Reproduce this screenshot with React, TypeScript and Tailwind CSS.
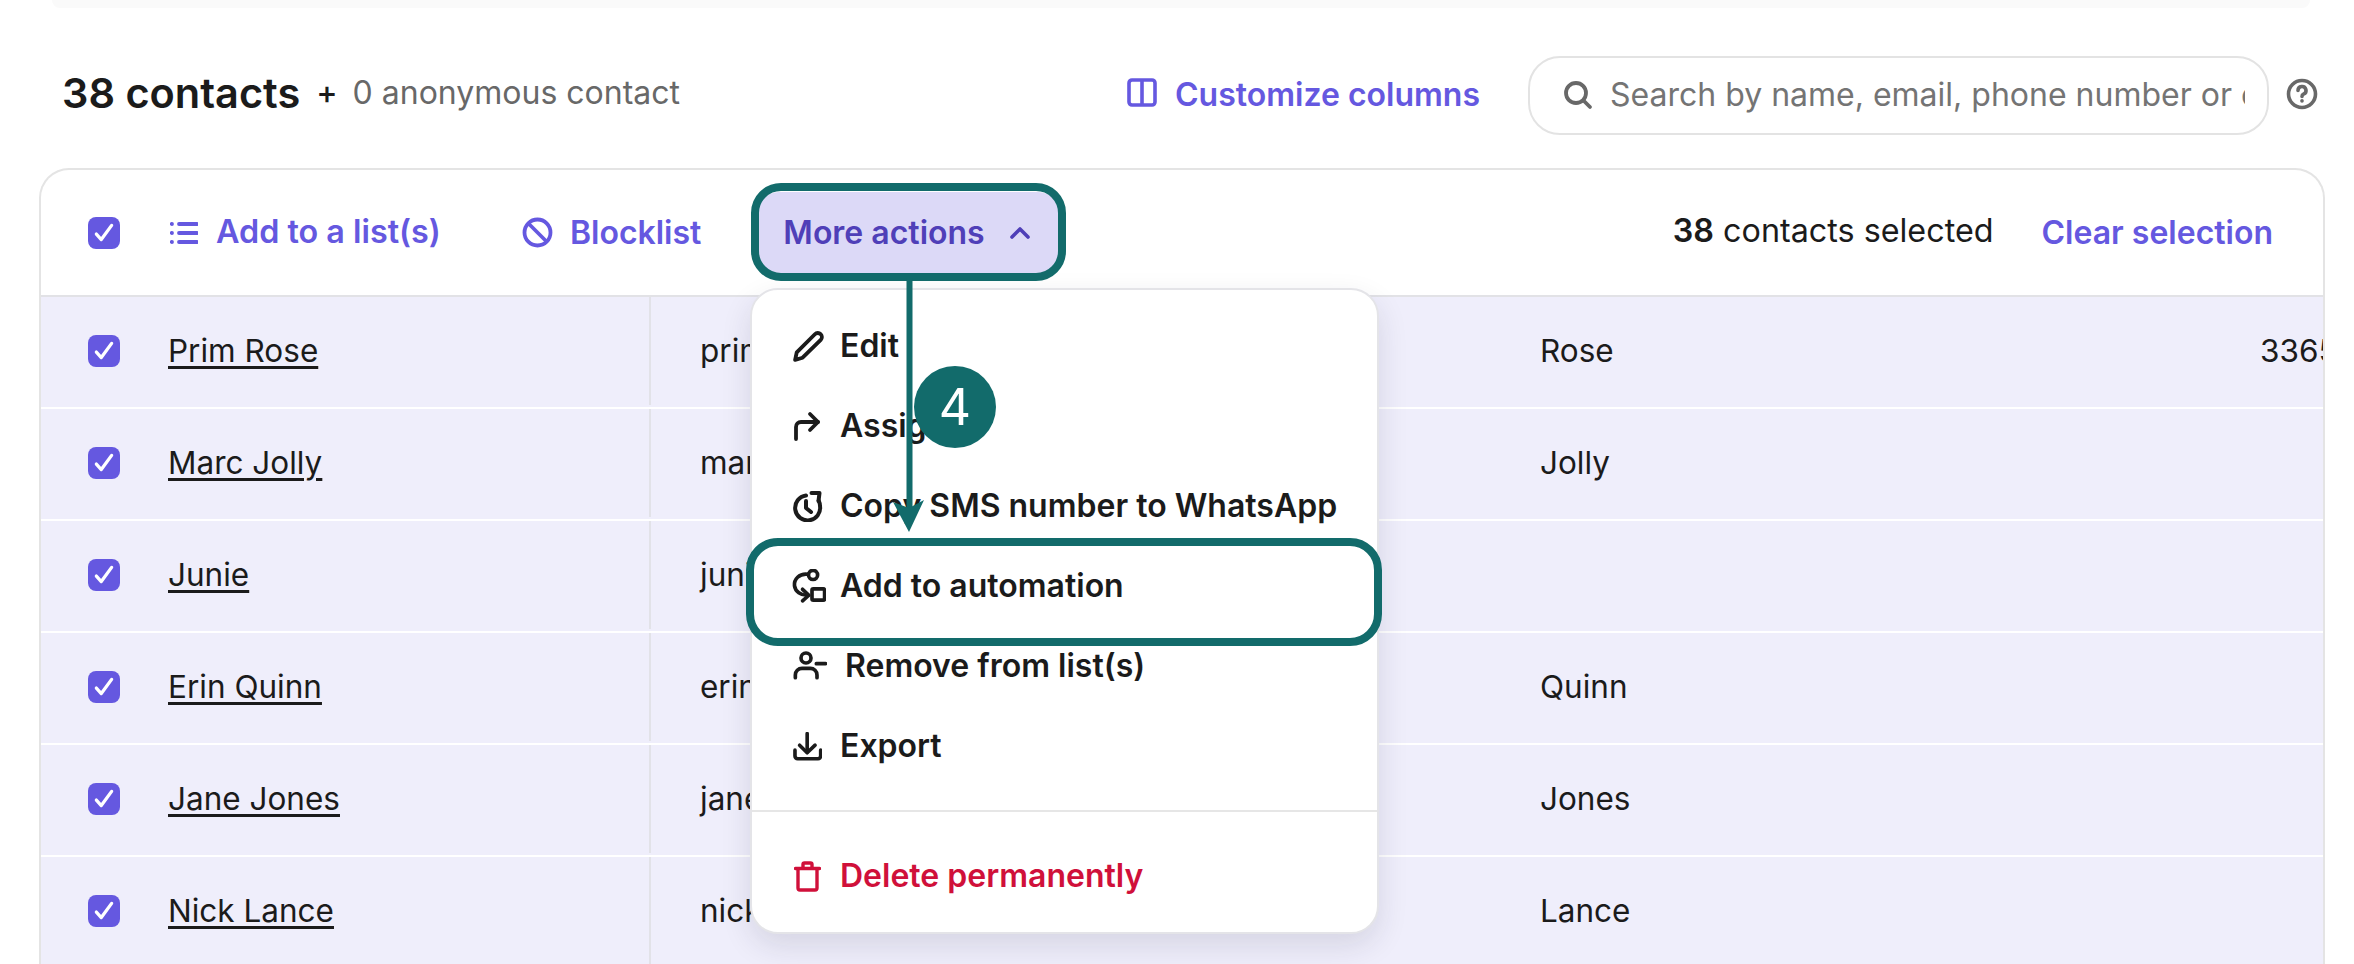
import React from "react";

const rows = [
  ["Prim Rose", "prim.rose@example.com", "Rose", "33655512345"],
  ["Marc Jolly", "marc.jolly@example.com", "Jolly", ""],
  ["Junie", "junie@example.com", "", ""],
  ["Erin Quinn", "erin.quinn@example.com", "Quinn", ""],
  ["Jane Jones", "jane.jones@example.com", "Jones", ""],
  ["Nick Lance", "nick.lance@example.com", "Lance", ""],
];

function Check() {
  return (
    <span className="flex h-8 w-8 shrink-0 items-center justify-center rounded-lg bg-[#6558e0]">
      <svg width="24" height="24" viewBox="0 0 22 22" fill="none" stroke="#fff" strokeWidth="3" strokeLinecap="round" strokeLinejoin="round">
        <path d="M4 12l4.500 5L18 4" />
      </svg>
    </span>
  );
}

function Item({ icon, label, red, extra }: { icon: React.ReactNode; label: string; red?: boolean; extra?: boolean }) {
  return (
    <div className={`flex h-20 items-center pl-[41px] text-[32px] font-semibold ${red ? "text-[#d0103a]" : "text-[#1b1b1b]"}`}>
      <span className={`flex h-8 items-center justify-start ${extra ? "w-[52px]" : "w-[47px]"}`}>{icon}</span>
      <span>{label}</span>
    </div>
  );
}

const s = { fill: "none", stroke: "#1b1b1b", strokeLinecap: "round" as const, strokeLinejoin: "round" as const };

export default function App() {
  return (
    <div className="relative flex h-[964px] w-[2354px] flex-col overflow-hidden bg-white font-['Inter',sans-serif] text-[#1b1b1b]">
      <div className="ml-[52px] h-2 w-[2258px] shrink-0 rounded-b-2xl bg-[#fafafa]" />
      <div className="flex h-[160px] shrink-0 items-center pl-[62px] pr-[36px] pt-[10px]">
        <span className="text-[41.500px] font-semibold">38 contacts</span>
        <span className="ml-4 text-[32px] font-medium">+</span>
        <span className="ml-[15px] text-[32px] text-[#686868]">0 anonymous contact</span>
        <div className="ml-auto flex items-center pt-[3px]">
          <svg width="30" height="30" viewBox="0 0 30 30" fill="none" stroke="#6558e0" strokeWidth="3.600" className="mb-[3px]">
            <rect x="2" y="2" width="26" height="25" rx="3" />
            <path d="M15 2v25" />
          </svg>
          <span className="ml-[18px] text-[32px] font-semibold text-[#6558e0]">Customize columns</span>
        </div>
        <div className="ml-[48px] mt-[4px] flex h-[79px] w-[741px] items-center overflow-hidden rounded-[32px] border-2 border-[#e3e3e3] pl-[33px] pr-[22px] text-[32px] text-[#747474]">
          <svg width="30" height="30" viewBox="0 0 30 30" fill="none" stroke="#686868" strokeWidth="3.800" strokeLinecap="round" className="shrink-0">
            <circle cx="13" cy="13" r="10" />
            <path d="M20.500 20.500L27 27" />
          </svg>
          <span className="ml-[17px] overflow-hidden whitespace-nowrap">Search by name, email, phone number or email</span>
        </div>
        <svg width="32" height="32" viewBox="0 0 32 32" fill="none" stroke="#686868" strokeWidth="3.600" strokeLinecap="round" className="ml-[17px] mt-[2px]">
          <circle cx="16" cy="16" r="13.500" />
          <path d="M12 12.500a4 4 0 1 1 5.500 3.700c-1 .5-1.500 1-1.500 2.300" />
          <path d="M16 22.800v.2" />
        </svg>
      </div>

      <div className="ml-[39px] flex w-[2286px] flex-1 flex-col overflow-hidden rounded-t-[30px] border-2 border-b-0 border-[#e4e4e4]">
        <div className="flex h-[127px] shrink-0 items-center border-b-2 border-[#e2e2e6] pl-[47px] pr-[50px]">
          <Check />
          <svg width="28" height="24" viewBox="0 0 28 24" fill="none" stroke="#6558e0" strokeWidth="3.800" strokeLinecap="round" className="ml-[50px]">
            <path d="M1.800 3h.2M1.800 12h.2M1.800 21h.2M9 3h18M9 12h18M9 21h18" />
          </svg>
          <span className="ml-[18px] text-[32.300px] font-semibold text-[#6558e0]">Add to a list(s)</span>
          <svg width="31" height="31" viewBox="0 0 31 31" fill="none" stroke="#6558e0" strokeWidth="3.800" className="ml-[81px]">
            <circle cx="15.500" cy="15.500" r="13" />
            <path d="M6.500 6.500l18 18" />
          </svg>
          <span className="ml-[17px] text-[32px] font-semibold text-[#6558e0]">Blocklist</span>
          <div className="ml-[56px] flex h-[82px] w-[303px] shrink-0 items-center rounded-[22px] bg-[#dcd9f7] pl-[26px] text-[32px] font-semibold text-[#4f3fb8]">
            <span>More actions</span>
            <svg width="22" height="14" viewBox="0 0 22 14" fill="none" stroke="#4f3fb8" strokeWidth="3.600" strokeLinecap="round" strokeLinejoin="round" className="ml-6">
              <path d="M3 11l8-8 8 8" />
            </svg>
          </div>
          <span className="mb-[3px] ml-auto text-[32.300px]">
            <span className="font-semibold">38</span> contacts selected
          </span>
          <span className="ml-[48px] text-[32px] font-semibold text-[#6558e0]">Clear selection</span>
        </div>
        {rows.map((r) => (
          <div key={r[0]} className="flex h-[112px] shrink-0 items-stretch border-b-2 border-white bg-[#efeefb] pb-[2px] text-[31.500px]">
            <div className="flex w-[610px] shrink-0 items-center border-r-2 border-[#e2e2e8] pl-[47px]">
              <Check />
              <span className="ml-12 underline decoration-[3px] underline-offset-[4px]">{r[0]}</span>
            </div>
            <div className="flex w-[889px] shrink-0 items-center pl-[49px]">{r[1]}</div>
            <div className="flex w-[720px] shrink-0 items-center">{r[2]}</div>
            <div className="flex min-w-0 flex-1 items-center overflow-hidden whitespace-nowrap">{r[3]}</div>
          </div>
        ))}
      </div>

      {/* open dropdown */}
      <div className="absolute left-[750px] top-[288px] h-[646px] w-[629px] overflow-hidden rounded-[28px] border-2 border-[#e4e4e8] bg-white pt-4 shadow-[0_12px_30px_rgba(30,30,60,0.12)]">
        <Item
          label="Edit"
          icon={
            <svg width="32" height="32" viewBox="0 0 30 30" {...s} strokeWidth="3.600">
              <path d="M2 28l1.500-7L20.500 4a3.700 3.700 0 0 1 5.500 5.300L9 26z" />
            </svg>
          }
        />
        <Item
          label="Assign"
          icon={
            <svg width="28" height="30" viewBox="0 0 28 30" {...s} strokeWidth="3.800">
              <path d="M3 28v-12a5 5 0 0 1 5-5h17" />
              <path d="M17 3l8 8-8 8" />
            </svg>
          }
        />
        <Item
          label="Copy SMS number to WhatsApp"
          icon={
            <svg width="30" height="32" viewBox="0 0 30 32" {...s} strokeWidth="4">
              <path d="M13 5.500A12.500 12.500 0 1 0 27 16c0-2-.5-3.800-1.300-5.300" />
              <path d="M18.500 3h8l-1 8" />
              <path d="M13 11v7l5 4" />
            </svg>
          }
        />
        <Item
          label="Add to automation"
          icon={
            <svg width="35" height="35" viewBox="62 30 100 100" {...s} strokeWidth="10.500" className="ml-[-2px] shrink-0">
              <circle cx="125" cy="47" r="13" />
              <path d="M110 45C85 42 70 60 72 78c2 16 18 28 38 27" />
              <path d="M95 88l18 17-18 16" />
              <rect x="122" y="87" width="36" height="32" rx="4" />
            </svg>
          }
        />
        <Item
          extra
          label="Remove from list(s)"
          icon={
            <svg width="34" height="30" viewBox="68 275 102 90" {...s} strokeWidth="11">
              <circle cx="107" cy="296" r="15" />
              <path d="M75 355v-8a20 20 0 0 1 20-20h25a20 20 0 0 1 20 20v8" />
              <path d="M138 313h28" />
            </svg>
          }
        />
        <Item
          label="Export"
          icon={
            <svg width="29" height="29" viewBox="70 515 88 88" {...s} strokeWidth="11">
              <path d="M113 520v56" />
              <path d="M90 555l23 23 24-23" />
              <path d="M76 570v18a8 8 0 0 0 8 8h62a8 8 0 0 0 8-8v-18" />
            </svg>
          }
        />
        <div className="mt-[24px] h-[2px] bg-[#e6e6e6]" />
        <div className="mt-[24px]">
          <Item
            red
            label="Delete permanently"
            icon={
              <svg width="27" height="31" viewBox="0 0 27 31" fill="none" stroke="#d0103a" strokeWidth="3.400" strokeLinecap="round" strokeLinejoin="round" className="ml-[1px]">
                <path d="M1.500 7.500h24" />
                <path d="M9 7V3.500A1.500 1.500 0 0 1 10.500 2h6A1.500 1.500 0 0 1 18 3.500V7" />
                <path d="M4 8v19a2 2 0 0 0 2 2h15a2 2 0 0 0 2-2V8" />
              </svg>
            }
          />
        </div>
      </div>

      {/* annotation overlay */}
      <div className="absolute left-[751px] top-[183px] h-[98px] w-[315px] rounded-[30px] border-[8px] border-[#126b6b]" />
      <div className="absolute left-[746px] top-[538px] h-[108px] w-[636px] rounded-[32px] border-[8px] border-[#126b6b]" />
      <svg width="40" height="256" viewBox="0 0 40 256" className="absolute left-[889px] top-[278px]">
        <path d="M20.500 0v232" stroke="#126b6b" strokeWidth="6" fill="none" />
        <path d="M4 224l16 30 15-32-15 8z" fill="#126b6b" />
      </svg>
      <div className="absolute left-[914px] top-[366px] flex h-[82px] w-[82px] items-center justify-center rounded-full bg-[#126b6b] text-[50px] text-white">4</div>
    </div>
  );
}
